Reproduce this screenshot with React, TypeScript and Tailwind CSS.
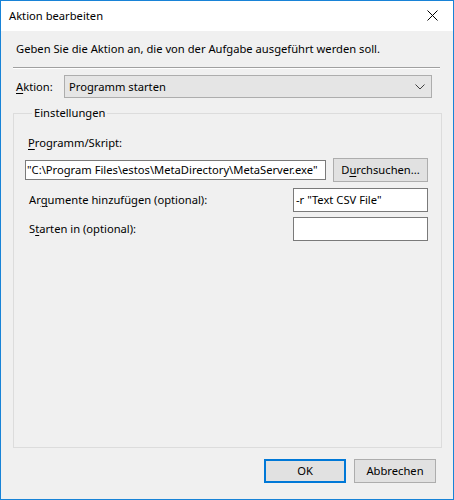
import React from "react";

const font = { fontFamily: '"Noto Sans", "Segoe UI", sans-serif' };

export default function App() {
  return (
    <div
      className="w-[454px] h-[500px] border border-[#1883d7] flex flex-col text-[11.2px] text-black leading-[16px]"
      style={font}
    >
      <div className="h-[30px] bg-white flex items-center justify-between pl-[8px] pr-[15px] shrink-0">
        <span>Aktion bearbeiten</span>
        <svg width="11" height="11" viewBox="0 0 11 11" className="mt-[-1px]">
          <path d="M0.5 0.5 L10.5 10.5 M10.5 0.5 L0.5 10.5" stroke="#000" strokeWidth="1" />
        </svg>
      </div>
      <div className="flex-1 bg-[#f0f0f0] flex flex-col pl-[12px] pr-[12px]">
        <div className="pt-[10px] pl-[3px] h-[36px]">
          Geben Sie die Aktion an, die von der Aufgabe ausgeführt werden soll.
        </div>
        <div className="h-[1px] bg-[#a0a0a0] mr-[1px]" />
        <div className="h-[1px] bg-white mr-[1px]" />
        <div className="flex items-center mt-[6px] h-[23px]">
          <span className="w-[51px] pl-[3px]">
            <span className="underline underline-offset-2">A</span>ktion:
          </span>
          <div className="w-[368px] h-[23px] border border-[#adadad] bg-[#e5e5e5] flex items-center justify-between pl-[4px] pr-[6px]">
            <span>Programm starten</span>
            <svg width="10" height="6" viewBox="0 0 10 6">
              <path d="M0.5 0.5 L5 5 L9.5 0.5" stroke="#404040" fill="none" strokeWidth="1" />
            </svg>
          </div>
        </div>
        <fieldset className="mt-[7px] w-[429px] h-[343px] border border-[#dcdcdc] pl-[11px] pr-[13px]">
          <legend className="ml-[7px] px-[2px] leading-[16px]">Einstellungen</legend>
          <div className="pt-[14px] pl-[3px]">
            <span className="underline underline-offset-2">P</span>rogramm/Skript:
          </div>
          <div className="flex items-center mt-[7px] h-[24px]">
            <div className="w-[301px] h-[20px] border border-[#7a7a7a] bg-white flex items-center pl-[1px] whitespace-nowrap overflow-hidden">
              "C:\Program Files\estos\MetaDirectory\MetaServer.exe"
            </div>
            <button className="ml-[7px] w-[95px] h-[24px] border border-[#adadad] bg-[#e1e1e1] flex items-center justify-center">
              <span>
                D<span className="underline underline-offset-2">u</span>rchsuchen...
              </span>
            </button>
          </div>
          <div className="flex items-center justify-between mt-[6px] h-[24px]">
            <span className="pl-[4px]">
              Ar<span className="underline underline-offset-2">g</span>umente hinzufügen (optional):
            </span>
            <div className="w-[135px] h-[24px] border border-[#7a7a7a] bg-white flex items-center pl-[2px] whitespace-nowrap">
              -r "Text CSV File"
            </div>
          </div>
          <div className="flex items-center justify-between mt-[5px] h-[24px]">
            <span className="pl-[4px]">
              S<span className="underline underline-offset-2">t</span>arten in (optional):
            </span>
            <div className="w-[135px] h-[24px] border border-[#7a7a7a] bg-white" />
          </div>
        </fieldset>
        <div className="flex justify-end mt-[11px] pr-[5px] gap-[8px]">
          <button className="w-[82px] h-[24px] border-2 border-[#0078d7] bg-[#e1e1e1] flex items-center justify-center">
            OK
          </button>
          <button className="w-[82px] h-[24px] border border-[#adadad] bg-[#e1e1e1] flex items-center justify-center">
            Abbrechen
          </button>
        </div>
      </div>
    </div>
  );
}
